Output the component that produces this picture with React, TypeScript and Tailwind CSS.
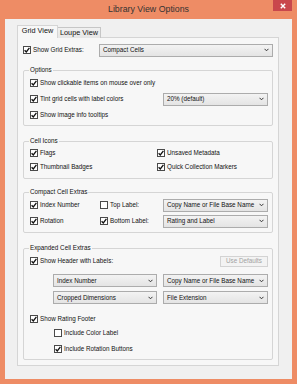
import type { ReactNode } from 'react'

function Check({ on = true }: { on?: boolean }) {
  return (
    <span className="flex h-[8px] w-[8px] shrink-0 items-center justify-center border border-[#4a4a4a] bg-white">
      {on && (
        <svg width="6" height="6" viewBox="0 0 6 6">
          <path d="M0.6 3.2 L2.3 4.9 L5.4 0.8" fill="none" stroke="#111" strokeWidth="1.3" />
        </svg>
      )}
    </span>
  )
}

function Box({ label, on = true }: { label: string; on?: boolean }) {
  return (
    <label className="flex items-center gap-[2px] whitespace-nowrap">
      <Check on={on} />
      <span>{label}</span>
    </label>
  )
}

function Select({ value, w }: { value: string; w: string }) {
  return (
    <div
      className={`flex h-[13px] ${w} shrink-0 items-center justify-between border border-[#acacac] bg-gradient-to-b from-[#f3f3f3] to-[#e4e4e4] pl-[3px] pr-[3px]`}
    >
      <span className="whitespace-nowrap">{value}</span>
      <svg width="5" height="4" viewBox="0 0 5 4">
        <path d="M0.5 0.8 L2.5 2.8 L4.5 0.8" fill="none" stroke="#333" strokeWidth="1" />
      </svg>
    </div>
  )
}

function Group({ title, className, children }: { title: string; className: string; children: ReactNode }) {
  return (
    <div className={`relative rounded-[2px] border border-[#d5d5d5] pl-[6px] pr-[4px] ${className}`}>
      <span className="absolute -top-[5px] left-[5px] bg-[#f7f7f7] px-[1px] leading-[8px]">{title}</span>
      {children}
    </div>
  )
}

export default function App() {
  return (
    <div
      className="h-[384px] w-[297px] bg-[#ee8c65] text-[6.3px] text-[#111]"
      style={{ fontFamily: '"Liberation Sans", Arial, sans-serif' }}
    >
      {/* Title bar */}
      <div className="relative flex h-[19px] items-center justify-center text-[8.8px] text-[#333]">
        Library View Options
        <div className="absolute right-[5px] top-0 flex h-[11px] w-[19px] items-center justify-center bg-[#c9474c]">
          <svg width="6" height="6" viewBox="0 0 6 6">
            <path d="M0.8 0.8 L5.2 5.2 M5.2 0.8 L0.8 5.2" stroke="#fff" strokeWidth="1.4" />
          </svg>
        </div>
      </div>

      {/* Client area */}
      <div className="mx-[5px] h-[360px] bg-[#f0f0f0] pl-[12px] pt-[6px]">
        {/* Tabs */}
        <div className="-mb-px flex h-[13px] items-end">
          <div className="relative z-10 flex h-[13px] w-[41px] items-center justify-center border-x border-t border-[#d5d5d5] bg-[#f7f7f7] pb-[1px] text-[7.3px]">
            Grid View
          </div>
          <div className="flex h-[11px] w-[43px] items-center justify-center border-r border-t border-[#c6c6c6] bg-gradient-to-b from-[#f0f0f0] to-[#e6e6e6] text-[7.3px]">
            Loupe View
          </div>
        </div>

        {/* Pane */}
        <div className="h-[329px] w-[262px] border border-[#d5d5d5] bg-[#f7f7f7] px-[5px] pt-[5px]">
          <div className="flex h-[14px] items-center justify-between">
            <Box label="Show Grid Extras:" />
            <Select value="Compact Cells" w="w-[174px]" />
          </div>

          <Group title="Options" className="mt-[13px] pb-[2px] pt-[4px]">
            <div className="flex h-[16px] items-center">
              <Box label="Show clickable items on mouse over only" />
            </div>
            <div className="flex h-[16px] items-center justify-between">
              <Box label="Tint grid cells with label colors" />
              <Select value="20% (default)" w="w-[105px]" />
            </div>
            <div className="flex h-[16px] items-center">
              <Box label="Show image info tooltips" />
            </div>
          </Group>

          <Group title="Cell Icons" className="mt-[15px] pb-[4px] pt-[4px]">
            <div className="grid grid-cols-[127px_1fr]">
              <div className="flex h-[14px] items-center">
                <Box label="Flags" />
              </div>
              <div className="flex h-[14px] items-center">
                <Box label="Unsaved Metadata" />
              </div>
              <div className="flex h-[14px] items-center">
                <Box label="Thumbnail Badges" />
              </div>
              <div className="flex h-[14px] items-center">
                <Box label="Quick Collection Markers" />
              </div>
            </div>
          </Group>

          <Group title="Compact Cell Extras" className="mt-[13px] pb-[3px] pt-[4px]">
            <div className="grid grid-cols-[70px_63px_1fr]">
              <div className="flex h-[16px] items-center">
                <Box label="Index Number" />
              </div>
              <div className="flex h-[16px] items-center">
                <Box label="Top Label:" on={false} />
              </div>
              <div className="flex h-[16px] items-center">
                <Select value="Copy Name or File Base Name" w="w-[105px]" />
              </div>
              <div className="flex h-[16px] items-center">
                <Box label="Rotation" />
              </div>
              <div className="flex h-[16px] items-center">
                <Box label="Bottom Label:" />
              </div>
              <div className="flex h-[16px] items-center">
                <Select value="Rating and Label" w="w-[105px]" />
              </div>
            </div>
          </Group>

          <Group title="Expanded Cell Extras" className="mt-[15px] pb-[3px] pt-[6px]">
            <div className="flex h-[12px] items-center justify-between">
              <Box label="Show Header with Labels:" />
              <div className="flex h-[11px] w-[48px] items-center justify-center border border-[#d3d3d3] bg-[#f3f3f3] text-[#a2a2a2]">
                Use Defaults
              </div>
            </div>
            <div className="ml-[23px] mt-[7px] flex gap-[6px]">
              <Select value="Index Number" w="w-[104px]" />
              <Select value="Copy Name or File Base Name" w="w-[105px]" />
            </div>
            <div className="ml-[23px] mt-[4px] flex gap-[6px]">
              <Select value="Cropped Dimensions" w="w-[104px]" />
              <Select value="File Extension" w="w-[105px]" />
            </div>
            <div className="mt-[8px] flex h-[14px] items-center">
              <Box label="Show Rating Footer" />
            </div>
            <div className="flex h-[14px] items-center pl-[24px]">
              <Box label="Include Color Label" on={false} />
            </div>
            <div className="mt-[2px] flex h-[14px] items-center pl-[24px]">
              <Box label="Include Rotation Buttons" />
            </div>
          </Group>
        </div>
      </div>
    </div>
  )
}
